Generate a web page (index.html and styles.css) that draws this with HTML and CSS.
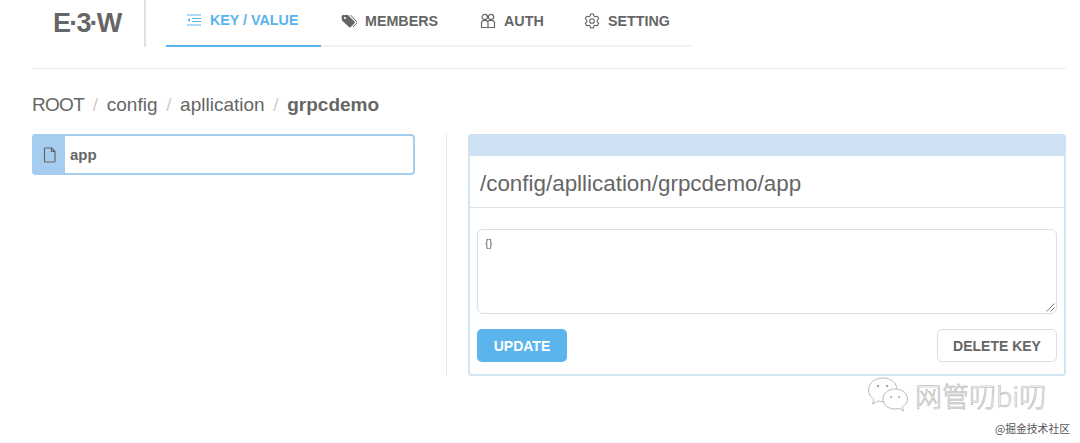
FILE: index.html
```html
<!DOCTYPE html>
<html lang="zh">
<head>
<meta charset="utf-8">
<title>E3W</title>
<link rel="stylesheet" href="styles.css">
</head>
<body>
<div class="page">
  <header class="top">
    <div class="logo-box"><span class="logo">E·3·W</span></div>
    <nav class="menu">
      <a class="tab active">
        <svg class="ico" viewBox="0 0 16 16" fill="none" stroke="currentColor" stroke-width="1.2"><path d="M1 3h14M6 6.500h9M6 9.500h9M1 13h14"/><path d="M4 6L1.500 8 4 10z" fill="currentColor" stroke="none"/></svg>
        <span>KEY / VALUE</span>
      </a>
      <a class="tab">
        <svg class="ico" viewBox="0 0 16 16"><path d="M0.500 3.500a1.500 1.500 0 0 1 1.500-1.500h5l6.500 6.500a1.300 1.300 0 0 1 0 1.800l-3.700 3.700a1.300 1.300 0 0 1-1.800 0L1 7.500z" fill="currentColor"/><circle cx="4" cy="5" r="1.100" fill="#fff"/><path d="M9.500 2l6 6.500a1.300 1.300 0 0 1 0 1.800l-3.500 3.700" fill="none" stroke="currentColor" stroke-width="1"/></svg>
        <span>MEMBERS</span>
      </a>
      <a class="tab">
        <svg class="ico" viewBox="0 0 16 16" fill="none" stroke="currentColor" stroke-width="1.200"><circle cx="4.800" cy="4" r="2.700"/><circle cx="11" cy="4" r="2.700"/><path d="M1.500 14.500V10a2.600 2.600 0 0 1 2.600-2.600h1.800A2.600 2.600 0 0 1 8 10v4.500z"/><path d="M8 8.200a2.600 2.600 0 0 1 2-.8h1.900A2.600 2.600 0 0 1 14.500 10v4.500H8"/></svg>
        <span>AUTH</span>
      </a>
      <a class="tab">
        <svg class="ico" viewBox="0 0 16 16" fill="none" stroke="currentColor" stroke-width="1.100"><path d="M6.600 1h2.800l.5 2 1.400.8 2-.6 1.400 2.400-1.500 1.500v1.800l1.500 1.500-1.400 2.400-2-.6-1.400.8-.5 2H6.600l-.5-2-1.400-.8-2 .6-1.400-2.400 1.500-1.500V7.100L1.300 5.600l1.400-2.400 2 .6 1.400-.8z" stroke-linejoin="round"/><circle cx="8" cy="8" r="2.300"/></svg>
        <span>SETTING</span>
      </a>
    </nav>
  </header>

  <div class="crumbs">
    <span>ROOT</span><i>/</i><span>config</span><i>/</i><span>apllication</span><i>/</i><b>grpcdemo</b>
  </div>

  <main class="content">
    <section class="left">
      <div class="item">
        <div class="item-icon">
          <svg viewBox="0 0 14 16" width="14" height="16" fill="none" stroke="#666" stroke-width="1.200"><path d="M2.500 1h6l3.500 3.500V14a1 1 0 0 1-1 1H2.500a1 1 0 0 1-1-1V2a1 1 0 0 1 1-1z" stroke-linejoin="round"/><path d="M8.500 1v3.500H12"/></svg>
        </div>
        <span class="item-name">app</span>
      </div>
    </section>
    <div class="sep"></div>
    <section class="panel">
      <div class="panel-bar"></div>
      <h2 class="panel-title">/config/apllication/grpcdemo/app</h2>
      <div class="panel-body">
        <div class="area">{}
          <svg class="grip" viewBox="0 0 9 9" width="9" height="9" stroke="#777" stroke-width="1"><path d="M8.500 .5l-8 8M8.500 4.500l-4 4"/></svg>
        </div>
        <div class="actions">
          <button class="btn primary">UPDATE</button>
          <button class="btn ghost">DELETE KEY</button>
        </div>
      </div>
    </section>
  </main>
</div>

<div class="wm">
  <svg class="wm-ico" viewBox="0 0 42 36" width="42" height="36" fill="#fff" stroke="#bdbdbd" stroke-width="1"><path d="M16 1C8 1 1.500 6 1.500 13c0 4 2 7 5.500 9.500L5.500 27l5.500-3c1.500.4 3 .6 5 .6 8 0 14-5 14-11.600C30 6 24 1 16 1z"/><path d="M28 12c-7 0-12 4.300-12 10s5 10 12 10c1.500 0 2.800-.2 4-.6l4.500 2.600-1.200-4c3.500-2 5.200-5 5.200-8 0-5.700-5.500-10-12.500-10z"/><g fill="#aaa" stroke="none"><circle cx="11" cy="9" r="1.300"/><circle cx="20" cy="9" r="1.300"/><circle cx="24" cy="20" r="1.100"/><circle cx="32" cy="20" r="1.100"/></g></svg>
  <span class="wm-text">网管叨bi叨</span>
  <span class="wm-src">@掘金技术社区</span>
</div>
</body>
</html>
```
FILE: styles.css
```css
* { box-sizing: border-box; }
html, body { margin: 0; height: 443px; overflow: hidden; background: #fff; }
body { font-family: "Liberation Sans", Arial, sans-serif; color: #666; position: relative; }
.page { padding: 0 14px 0 32px; }

.top { display: flex; height: 69px; border-bottom: 1px solid #e9ecee; }
.logo-box { width: 114px; height: 47px; border-right: 2px solid #dfe1e3; padding-left: 21px; display: flex; align-items: center; }
.logo { font-size: 27px; font-weight: 700; color: #666; letter-spacing: -1.800px; }
.menu { margin-left: 20px; width: 525px; height: 47px; display: flex; border-bottom: 2px solid #f1f2f3; }
.tab { height: 47px; padding: 0 20px; display: flex; align-items: center; gap: 8px; font-size: 14.300px; font-weight: 700; color: #666; padding-bottom: 5px; }
.tab.active { color: #5bb4ec; border-bottom: 2px solid #5bb4ec; width: 155px; }
.ico { width: 16px; height: 16px; flex: none; }
.tab:nth-child(2) { width: 139px; }
.tab:nth-child(3) { width: 104px; }

.crumbs { display: flex; height: 65px; padding-top: 6px; align-items: center; font-size: 19px; color: #666; }
.crumbs i { font-style: normal; color: #ccc; margin: 0 8.700px; }
.crumbs b { color: #666; }
.crumbs span:first-child { letter-spacing: -0.7px; }

.content { display: flex; align-items: stretch; height: 242px; }
.left { width: 383px; flex: none; }
.item { height: 41px; display: flex; border: 2px solid #a4cdf0; border-radius: 4px; align-items: stretch; }
.item-icon { width: 33px; margin: -2px 0 -2px -2px; padding-left: 3px; background: #a4cdf0; border-radius: 4px 0 0 4px; display: flex; align-items: center; justify-content: center; flex: none; }
.item-name { font-size: 15px; font-weight: 700; padding-left: 5px; line-height: 37px; }
.sep { width: 1px; background: #e6e8ea; margin: 0 21px 0 31px; flex: none; }

.panel { width: 598px; flex: none; border: 2px solid #d2e5f3; border-radius: 4px; display: flex; flex-direction: column; }
.panel-bar { background: #cfe2f3; flex: none; margin: -2px -2px 0; border-radius: 4px 4px 0 0; height: 22px; }
.panel-title { margin: 0; height: 52px; padding-left: 10px; font-size: 22.400px; font-weight: 400; line-height: 56px; color: #666; border-bottom: 1px solid #dfe2e4; }
.panel-body { padding: 21px 7px 0; }
.area { position: relative; height: 85px; border: 1px solid #dcdfe2; border-radius: 6px; padding: 7px 7px; font-size: 11px; color: #666; }
.grip { position: absolute; right: 1px; bottom: 1px; }
.actions { display: flex; justify-content: space-between; margin-top: 15px; }
.btn { height: 33px; border-radius: 5px; font-family: inherit; font-size: 14px; font-weight: 700; }
.primary { width: 90px; background: #5bb4ec; border: 0; color: #fff; }
.ghost { width: 120px; background: #fff; border: 1px solid #dcdfe2; color: #666; }

.wm { position: absolute; inset: 0; pointer-events: none; }
.wm-ico { position: absolute; left: 867px; top: 377px; }
.wm-text { position: absolute; left: 915px; top: 380px; font-family: "Noto Sans CJK SC", sans-serif; font-size: 27px; font-weight: 300; line-height: 32px; color: #fff; -webkit-text-stroke: 0.6px #b0b0b0; white-space: nowrap; }
.wm-src { position: absolute; left: 995px; top: 421px; font-family: "Noto Sans CJK SC", sans-serif; font-size: 10.800px; line-height: 14px; color: #555; white-space: nowrap; }
```
